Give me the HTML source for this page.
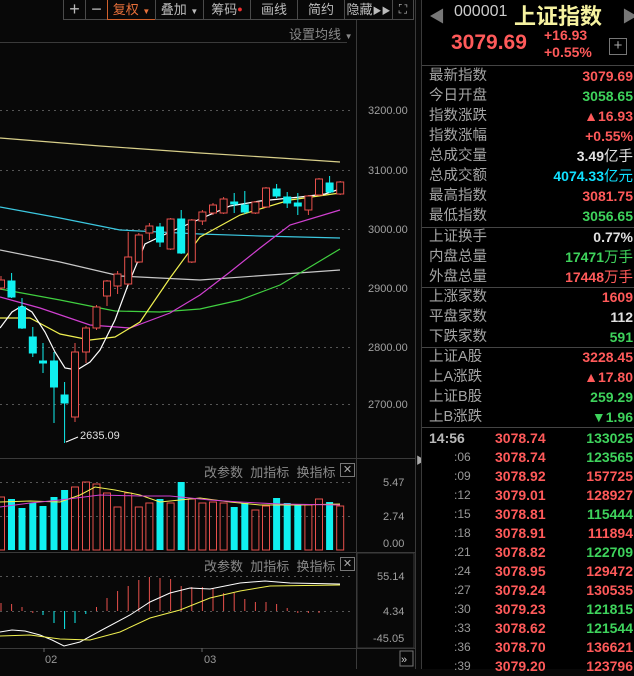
<!DOCTYPE html>
<html><head><meta charset="utf-8"><style>
*{margin:0;padding:0;box-sizing:border-box}
body{width:634px;height:669px;background:#080808;overflow:hidden;position:relative;font-family:"Liberation Sans","Noto Sans CJK SC",sans-serif;color:#aaa}
.a{position:absolute;white-space:nowrap}
.btn{position:absolute;top:0;height:20px;border:1px solid #4a4a4a;border-top:none;color:#bbb;font-size:13px;line-height:19px;text-align:center}
.rp{position:absolute;left:421px;top:0;width:213px;height:669px;background:#000;border-left:1px solid #3a3a3a}
.row{position:absolute;left:7px;width:204px;height:20px;font-size:14.5px;line-height:20px;color:#a4a4a4}
.row b{position:absolute;right:0;top:0;font-size:14px;font-weight:bold}
.r{color:#ff5a5a}.g{color:#3ed35c}.w{color:#e0e0e0}.c{color:#10e0ff}
.hl{position:absolute;left:0;width:213px;height:1px;background:#444}
.tk{position:absolute;left:0;width:213px;height:19px;font-size:14px;line-height:19px;font-weight:bold}
.tk i{position:absolute;font-style:normal}
</style></head><body>
<div class="btn" style="left:63px;width:23px;font-size:18px">+</div>
<div class="btn" style="left:85px;width:23px;font-size:18px">−</div>
<div class="btn" style="left:107px;width:49px;border-color:#d0602c;border-top:none;color:#e8703a">复权 <span style="font-size:8px">▼</span></div>
<div class="btn" style="left:155px;width:49px">叠加 <span style="font-size:8px">▼</span></div>
<div class="btn" style="left:203px;width:48px">筹码<span style="color:#f03030;font-size:9px;vertical-align:top">●</span></div>
<div class="btn" style="left:250px;width:48px">画线</div>
<div class="btn" style="left:297px;width:48px">简约</div>
<div class="btn" style="left:344px;width:49px">隐藏<span style="font-size:9px">▶▶</span></div>
<div class="btn" style="left:392px;width:22px;font-size:12px">⛶</div>
<div class="a" style="left:289px;top:24px;font-size:13px;color:#8a8a8a">设置均线 <span style="font-size:8px">▼</span></div>

<svg class="a" style="left:0;top:0" width="421" height="669">
<g stroke="#3a3a3a" stroke-width="1" fill="none">
<line x1="0" y1="42.5" x2="347" y2="42.5"/>
<line x1="356.5" y1="20" x2="356.5" y2="669"/>
<line x1="415.5" y1="0" x2="415.5" y2="669"/>
<line x1="0" y1="458.5" x2="415" y2="458.5"/>
<line x1="0" y1="552.5" x2="415" y2="552.5"/>
<line x1="0" y1="648.5" x2="415" y2="648.5"/>
<rect x="357" y="553" width="57" height="95"/>
</g>
<g stroke="#555" stroke-dasharray="2,4">
<line x1="0" y1="110.5" x2="352" y2="110.5"/><line x1="0" y1="170.5" x2="352" y2="170.5"/><line x1="0" y1="229.5" x2="352" y2="229.5"/><line x1="0" y1="288.5" x2="352" y2="288.5"/><line x1="0" y1="347.5" x2="352" y2="347.5"/><line x1="0" y1="404.5" x2="352" y2="404.5"/>
<line x1="0" y1="482.5" x2="352" y2="482.5"/><line x1="0" y1="516.5" x2="352" y2="516.5"/>
<line x1="0" y1="576.5" x2="352" y2="576.5"/><line x1="0" y1="611.5" x2="352" y2="611.5"/>
</g>
<g fill="#a0a0a0" font-size="11" font-family="Liberation Sans,sans-serif">
<text x="368" y="114">3200.00</text><text x="368" y="174">3100.00</text><text x="368" y="233">3000.00</text><text x="368" y="292">2900.00</text><text x="368" y="351">2800.00</text><text x="368" y="408">2700.00</text>
<text x="383" y="486">5.47</text><text x="383" y="520">2.74</text><text x="383" y="547">0.00</text>
<text x="377" y="580">55.14</text><text x="383" y="615">4.34</text><text x="373" y="642">-45.05</text>
<text x="45" y="663" fill="#999">02</text><text x="204" y="663" fill="#999">03</text>
</g>
<line x1="44" y1="648" x2="44" y2="652" stroke="#666"/><line x1="202" y1="648" x2="202" y2="652" stroke="#666"/>
<!-- MAs -->
<g fill="none" stroke-width="1.2">
<polyline stroke="#d8cf8a" points="0,138 100,146 200,153 280,158 340,162"/>
<polyline stroke="#3cc8e0" points="0,207 60,218 120,230 200,234 260,236 340,238"/>
<polyline stroke="#c8c8c8" points="0,250 60,262 120,276 200,280 270,275 340,270"/>
<polyline stroke="#40d040" points="0,289 60,300 115,311 160,312 200,309 240,300 280,285 340,249"/>
<polyline stroke="#d040d0" points="0,297 40,308 90,325 130,328 170,313 200,295 230,272 260,248 290,225 340,210"/>
<polyline stroke="#f0f050" points="0,318 30,318 60,334 90,340 115,337 140,322 170,278 200,237 240,215 290,200 340,193"/>
<polyline stroke="#ffffff" points="0,328 12,312 22,306 32,312 45,332 55,352 65,368 77,370 90,362 100,350 115,320 128,285 145,244 170,232 200,219 230,206 260,201 300,197 325,194 340,189"/>
</g>
<!-- candles -->
<g stroke="#e8504c" fill="#080808" stroke-width="1">
<line x1="1" y1="276" x2="1" y2="290"/><rect x="-2.5" y="280" width="7" height="8"/>
<line x1="75" y1="343" x2="75" y2="422"/><rect x="71.5" y="352" width="7" height="65"/>
<line x1="86" y1="326" x2="86" y2="363"/><rect x="82.5" y="328" width="7" height="24"/>
<line x1="96.5" y1="305" x2="96.5" y2="330"/><rect x="93" y="307" width="7" height="21"/>
<line x1="107" y1="280" x2="107" y2="306"/><rect x="103.5" y="281" width="7" height="15"/>
<line x1="117.6" y1="271" x2="117.6" y2="294"/><rect x="114" y="274" width="7" height="12"/>
<line x1="128.2" y1="232" x2="128.2" y2="285"/><rect x="124.7" y="257" width="7" height="27"/>
<line x1="138.8" y1="233" x2="138.8" y2="263"/><rect x="135.3" y="235" width="7" height="27"/>
<line x1="149.4" y1="223" x2="149.4" y2="240"/><rect x="145.9" y="226" width="7" height="7"/>
<line x1="170.6" y1="218" x2="170.6" y2="250"/><rect x="167.1" y="219" width="7" height="30"/>
<line x1="191.8" y1="219" x2="191.8" y2="263"/><rect x="188.3" y="220" width="7" height="42"/>
<line x1="202.4" y1="210" x2="202.4" y2="225"/><rect x="198.9" y="212" width="7" height="9"/>
<line x1="213" y1="203" x2="213" y2="215"/><rect x="209.5" y="205" width="7" height="8"/>
<line x1="223.6" y1="197" x2="223.6" y2="214"/><rect x="220.1" y="199" width="7" height="14"/>
<line x1="255.4" y1="201" x2="255.4" y2="214"/><rect x="251.9" y="202" width="7" height="11"/>
<line x1="266" y1="187" x2="266" y2="208"/><rect x="262.5" y="188" width="7" height="19"/>
<line x1="308.4" y1="195" x2="308.4" y2="215"/><rect x="304.9" y="196" width="7" height="14"/>
<line x1="319" y1="178" x2="319" y2="196"/><rect x="315.5" y="179" width="7" height="16"/>
<line x1="340.2" y1="181" x2="340.2" y2="195"/><rect x="336.7" y="182" width="7" height="12"/>
</g>
<g stroke="#10f0f0" fill="#10f0f0" stroke-width="1">
<line x1="11.6" y1="273" x2="11.6" y2="298"/><rect x="8" y="281" width="7" height="16"/>
<line x1="22" y1="298" x2="22" y2="329"/><rect x="18.5" y="307" width="7" height="21"/>
<line x1="32.8" y1="327" x2="32.8" y2="357"/><rect x="29.3" y="337" width="7" height="16"/>
<line x1="43" y1="343" x2="43" y2="373"/><rect x="39.5" y="361" width="7" height="2"/>
<line x1="54" y1="352" x2="54" y2="423"/><rect x="50.5" y="361" width="7" height="26"/>
<line x1="64.6" y1="382" x2="64.6" y2="443"/><rect x="61.1" y="395" width="7" height="8"/>
<line x1="160" y1="223" x2="160" y2="247"/><rect x="156.5" y="227" width="7" height="15"/>
<line x1="181.2" y1="210" x2="181.2" y2="254"/><rect x="177.7" y="219" width="7" height="34"/>
<line x1="234.2" y1="193" x2="234.2" y2="213"/><rect x="230.7" y="202" width="7" height="2"/>
<line x1="244.8" y1="191" x2="244.8" y2="214"/><rect x="241.3" y="205" width="7" height="7"/>
<line x1="276.6" y1="184" x2="276.6" y2="198"/><rect x="273.1" y="189" width="7" height="7"/>
<line x1="287.2" y1="192" x2="287.2" y2="208"/><rect x="283.7" y="197" width="7" height="6"/>
<line x1="297.8" y1="193" x2="297.8" y2="215"/><rect x="294.3" y="203" width="7" height="3"/>
<line x1="329.6" y1="176" x2="329.6" y2="193"/><rect x="326.1" y="183" width="7" height="9"/>
</g>
<line x1="66" y1="442" x2="78" y2="437" stroke="#fff"/>
<text x="80" y="439" fill="#e0e0e0" font-size="11" font-family="Liberation Sans,sans-serif">2635.09</text>
<!-- volume -->
<g stroke="#e8504c" fill="none">
<rect x="-2.5" y="497" width="7" height="53"/><rect x="71.5" y="487" width="7" height="63"/><rect x="82.5" y="482" width="7" height="68"/><rect x="93" y="484" width="7" height="66"/><rect x="103.5" y="493" width="7" height="57"/><rect x="114" y="507" width="7" height="43"/><rect x="124.7" y="493" width="7" height="57"/><rect x="135.3" y="507" width="7" height="43"/><rect x="145.9" y="503" width="7" height="47"/><rect x="167.1" y="503" width="7" height="47"/><rect x="188.3" y="499" width="7" height="51"/><rect x="198.9" y="503" width="7" height="47"/><rect x="209.5" y="502" width="7" height="48"/><rect x="220.1" y="503" width="7" height="47"/><rect x="251.9" y="510" width="7" height="40"/><rect x="262.5" y="506" width="7" height="44"/><rect x="304.9" y="505" width="7" height="45"/><rect x="315.5" y="499" width="7" height="51"/><rect x="336.7" y="506" width="7" height="44"/>
</g>
<g fill="#10f0f0">
<rect x="8" y="499" width="7" height="51"/><rect x="18.5" y="508" width="7" height="42"/><rect x="29.3" y="503" width="7" height="47"/><rect x="39.5" y="506" width="7" height="44"/><rect x="50.5" y="497" width="7" height="53"/><rect x="61.1" y="490" width="7" height="60"/><rect x="156.5" y="499" width="7" height="51"/><rect x="177.7" y="482" width="7" height="68"/><rect x="230.7" y="507" width="7" height="43"/><rect x="241.3" y="503" width="7" height="47"/><rect x="273.1" y="498" width="7" height="52"/><rect x="283.7" y="503" width="7" height="47"/><rect x="294.3" y="505" width="7" height="45"/><rect x="326.1" y="502" width="7" height="48"/>
</g>
<polyline fill="none" stroke="#f0f050" points="0,502 30,501 60,502 80,495 95,487 115,490 140,495 160,502 200,498 230,502 260,505 300,505 340,504"/>
<polyline fill="none" stroke="#d040d0" points="0,507 30,503 60,500 100,495 140,496 170,496 210,500 240,502 280,504 340,505"/>
<!-- MACD -->
<g stroke="#e8504c">
<line x1="1" y1="611" x2="1" y2="603"/><line x1="11.6" y1="611" x2="11.6" y2="604"/><line x1="22" y1="611" x2="22" y2="607"/><line x1="32.8" y1="611" x2="32.8" y2="613"/>
<line x1="96.5" y1="611" x2="96.5" y2="607"/><line x1="107" y1="611" x2="107" y2="598"/><line x1="117.6" y1="611" x2="117.6" y2="591"/><line x1="128.2" y1="611" x2="128.2" y2="586"/><line x1="138.8" y1="611" x2="138.8" y2="580"/><line x1="149.4" y1="611" x2="149.4" y2="577"/><line x1="160" y1="611" x2="160" y2="578"/><line x1="170.6" y1="611" x2="170.6" y2="579"/><line x1="181.2" y1="611" x2="181.2" y2="586"/><line x1="191.8" y1="611" x2="191.8" y2="587"/><line x1="202.4" y1="611" x2="202.4" y2="587"/><line x1="213" y1="611" x2="213" y2="588"/><line x1="223.6" y1="611" x2="223.6" y2="593"/><line x1="234.2" y1="611" x2="234.2" y2="593"/><line x1="244.8" y1="611" x2="244.8" y2="599"/><line x1="255.4" y1="611" x2="255.4" y2="602"/><line x1="266" y1="611" x2="266" y2="602"/><line x1="276.6" y1="611" x2="276.6" y2="604"/><line x1="287.2" y1="611" x2="287.2" y2="608"/><line x1="297.8" y1="611" x2="297.8" y2="613"/><line x1="308.4" y1="611" x2="308.4" y2="613"/><line x1="319" y1="611" x2="319" y2="613"/>
</g>
<g stroke="#10f0f0">
<line x1="43" y1="611" x2="43" y2="615"/><line x1="54" y1="611" x2="54" y2="623"/><line x1="64.6" y1="611" x2="64.6" y2="629"/><line x1="75" y1="611" x2="75" y2="623"/><line x1="85.8" y1="611" x2="85.8" y2="614"/>
</g>
<polyline fill="none" stroke="#fff" points="0,632 12,630 25,631 40,635 52,640 64,646 80,642 100,631 130,615 150,602 170,593 190,588 210,589 240,583 265,581 290,583 340,584"/>
<polyline fill="none" stroke="#f0f050" points="0,636 30,635 60,639 90,640 120,632 150,618 180,610 210,598 240,591 270,586 340,585"/>
<rect x="400" y="651" width="13" height="15" fill="none" stroke="#777"/>
<text x="401" y="663" fill="#ccc" font-size="11">»</text>
</svg>
<div class="a" style="left:204px;top:462px;font-size:13px;color:#8a8a8a">改参数&nbsp; 加指标&nbsp; 换指标</div>
<div class="a" style="left:340px;top:463px;width:15px;height:14px;border:1px solid #777;color:#aaa;font-size:11px;line-height:12px;text-align:center">✕</div>
<div class="a" style="left:204px;top:556px;font-size:13px;color:#8a8a8a">改参数&nbsp; 加指标&nbsp; 换指标</div>
<div class="a" style="left:340px;top:557px;width:15px;height:14px;border:1px solid #777;color:#aaa;font-size:11px;line-height:12px;text-align:center">✕</div>
<div class="a" style="left:416px;top:452px;font-size:10px;color:#aaa">▶</div>

<div class="rp">
<div class="a" style="left:7px;top:3px;font-size:16px;color:#777">◀</div>
<div class="a" style="left:32px;top:3px;font-size:16px;color:#ccc">000001</div>
<div class="a" style="left:92px;top:-1px;font-size:22px;color:#f6f2a0;font-weight:bold">上证指数</div>
<div class="a" style="left:200px;top:3px;font-size:16px;color:#777">▶</div>
<div class="a" style="left:29px;top:31px;font-size:21px;font-weight:bold;color:#ff5a5a">3079.69</div>
<div class="a" style="left:122px;top:27px;font-size:14px;font-weight:bold;color:#ff5a5a">+16.93</div>
<div class="a" style="left:122px;top:44px;font-size:14px;font-weight:bold;color:#ff5a5a">+0.55%</div>
<div class="a" style="left:187px;top:38px;width:18px;height:17px;border:1px solid #777;color:#aaa;font-size:15px;line-height:14px;text-align:center">+</div>
<div class="hl" style="top:65px"></div>
<div class="row" style="top:66px">最新指数<b class="r">3079.69</b></div>
<div class="row" style="top:86px">今日开盘<b class="g">3058.65</b></div>
<div class="row" style="top:106px">指数涨跌<b class="r">▲16.93</b></div>
<div class="row" style="top:126px">指数涨幅<b class="r">+0.55%</b></div>
<div class="row" style="top:146px">总成交量<b class="w">3.49<span style="font-weight:normal;font-size:14.5px">亿手</span></b></div>
<div class="row" style="top:166px">总成交额<b class="c">4074.33<span style="font-weight:normal;font-size:14.5px">亿元</span></b></div>
<div class="row" style="top:186px">最高指数<b class="r">3081.75</b></div>
<div class="row" style="top:206px">最低指数<b class="g">3056.65</b></div>
<div class="hl" style="top:227px"></div>
<div class="row" style="top:227px">上证换手<b class="w">0.77%</b></div>
<div class="row" style="top:247px">内盘总量<b class="g">17471<span style="font-weight:normal;font-size:14.5px">万手</span></b></div>
<div class="row" style="top:267px">外盘总量<b class="r">17448<span style="font-weight:normal;font-size:14.5px">万手</span></b></div>
<div class="hl" style="top:287px"></div>
<div class="row" style="top:287px">上涨家数<b class="r">1609</b></div>
<div class="row" style="top:307px">平盘家数<b class="w">112</b></div>
<div class="row" style="top:327px">下跌家数<b class="g">591</b></div>
<div class="hl" style="top:347px"></div>
<div class="row" style="top:347px">上证A股<b class="r">3228.45</b></div>
<div class="row" style="top:367px">上A涨跌<b class="r">▲17.80</b></div>
<div class="row" style="top:387px">上证B股<b class="g">259.29</b></div>
<div class="row" style="top:407px">上B涨跌<b class="g">▼1.96</b></div>
<div class="hl" style="top:427px"></div>
<div class="tk" style="top:429px"><i style="left:7px;color:#b8b8b8">14:56</i><i style="left:73px" class="r">3078.74</i><i style="right:2px" class="g">133025</i></div>
<div class="tk" style="top:448px"><i style="left:32px;color:#999;font-weight:normal;font-size:12px">:06</i><i style="left:73px" class="r">3078.74</i><i style="right:2px" class="g">123565</i></div>
<div class="tk" style="top:467px"><i style="left:32px;color:#999;font-weight:normal;font-size:12px">:09</i><i style="left:73px" class="r">3078.92</i><i style="right:2px" class="r">157725</i></div>
<div class="tk" style="top:486px"><i style="left:32px;color:#999;font-weight:normal;font-size:12px">:12</i><i style="left:73px" class="r">3079.01</i><i style="right:2px" class="r">128927</i></div>
<div class="tk" style="top:505px"><i style="left:32px;color:#999;font-weight:normal;font-size:12px">:15</i><i style="left:73px" class="r">3078.81</i><i style="right:2px" class="g">115444</i></div>
<div class="tk" style="top:524px"><i style="left:32px;color:#999;font-weight:normal;font-size:12px">:18</i><i style="left:73px" class="r">3078.91</i><i style="right:2px" class="r">111894</i></div>
<div class="tk" style="top:543px"><i style="left:32px;color:#999;font-weight:normal;font-size:12px">:21</i><i style="left:73px" class="r">3078.82</i><i style="right:2px" class="g">122709</i></div>
<div class="tk" style="top:562px"><i style="left:32px;color:#999;font-weight:normal;font-size:12px">:24</i><i style="left:73px" class="r">3078.95</i><i style="right:2px" class="r">129472</i></div>
<div class="tk" style="top:581px"><i style="left:32px;color:#999;font-weight:normal;font-size:12px">:27</i><i style="left:73px" class="r">3079.24</i><i style="right:2px" class="r">130535</i></div>
<div class="tk" style="top:600px"><i style="left:32px;color:#999;font-weight:normal;font-size:12px">:30</i><i style="left:73px" class="r">3079.23</i><i style="right:2px" class="g">121815</i></div>
<div class="tk" style="top:619px"><i style="left:32px;color:#999;font-weight:normal;font-size:12px">:33</i><i style="left:73px" class="r">3078.62</i><i style="right:2px" class="g">121544</i></div>
<div class="tk" style="top:638px"><i style="left:32px;color:#999;font-weight:normal;font-size:12px">:36</i><i style="left:73px" class="r">3078.70</i><i style="right:2px" class="r">136621</i></div>
<div class="tk" style="top:657px"><i style="left:32px;color:#999;font-weight:normal;font-size:12px">:39</i><i style="left:73px" class="r">3079.20</i><i style="right:2px" class="r">123796</i></div>
</div>
</body></html>
